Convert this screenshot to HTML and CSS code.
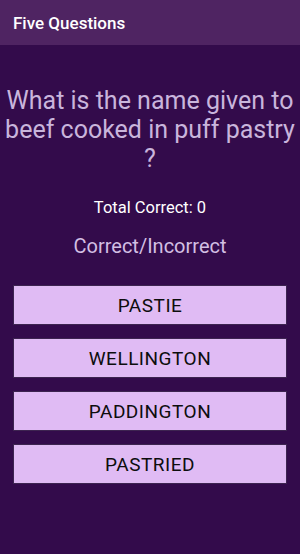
FILE: index.html
```html
<!DOCTYPE html>
<html lang="en">
<head>
  <meta charset="UTF-8">
  <meta name="viewport" content="width=device-width, initial-scale=1.0">
  <title>Five Questions</title>
  <link rel="stylesheet" href="styles.css">
</head>
<body>
  <div class="app">
    <div class="app-bar">Five Questions</div>
    <div class="quiz">
      <div class="question">What is the name given to beef cooked in puff pastry ?</div>
      <div class="score">Total Correct: 0</div>
      <div class="result">Correct/Incorrect</div>
      <div class="answers">
        <button class="answer">PASTIE</button>
        <button class="answer">WELLINGTON</button>
        <button class="answer">PADDINGTON</button>
        <button class="answer">PASTRIED</button>
      </div>
    </div>
  </div>
</body>
</html>
```

FILE: styles.css
```css
* {
  margin: 0;
  padding: 0;
  box-sizing: border-box;
}

html, body {
  height: 100%;
}

body {
  font-family: Roboto, "Noto Sans", Arial, sans-serif;
  background-color: #330b4b;
}

.app {
  display: flex;
  flex-direction: column;
  min-height: 100%;
}

.app-bar {
  height: 45px;
  background: #4f2462;
  color: #fff;
  font-size: 17px;
  font-weight: 500;
  padding-left: 13px;
  display: flex;
  align-items: center;
}

.quiz {
  display: flex;
  flex-direction: column;
  align-items: center;
  padding: 41px 0 0;
}

.question {
  color: #c9b5dc;
  font-size: 25px;
  line-height: 29px;
  text-align: center;
  padding: 0 2px;
}

.score {
  margin-top: 25px;
  color: #fff;
  font-size: 16.5px;
  line-height: 19px;
}

.result {
  margin-top: 17px;
  color: #d2bfe3;
  font-size: 20px;
  line-height: 24px;
}

.answers {
  margin-top: 27px;
  width: 100%;
  padding: 0 13px;
  display: flex;
  flex-direction: column;
  gap: 13px;
}

.answer {
  height: 40px;
  width: 100%;
  background: #e0bbf4;
  border: 1px solid #3d2450;
  color: #0d0d0d;
  font-family: Roboto, "Noto Sans", Arial, sans-serif;
  font-size: 19px;
  letter-spacing: 0.5px;
  cursor: pointer;
}
```
